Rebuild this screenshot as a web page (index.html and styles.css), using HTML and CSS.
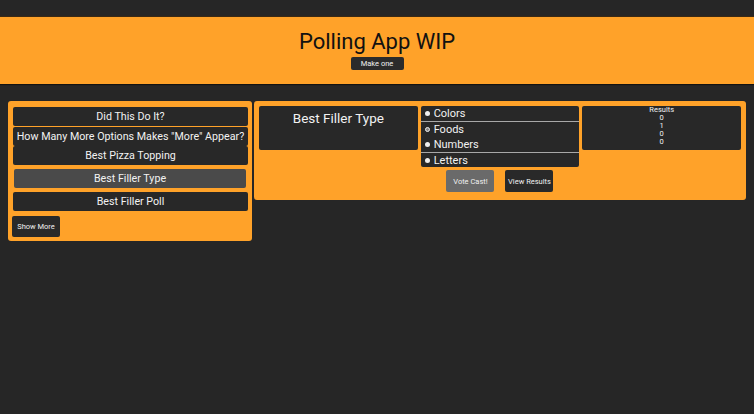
FILE: index.html
```html
<!DOCTYPE html>
<html>
<head>
<meta charset="utf-8">
<link rel="stylesheet" href="styles.css">
</head>
<body>
<header class="hero">
  <h1 class="hero-title">Polling App WIP</h1>
  <button class="btn-small">Make one</button>
</header>
<main class="main">
  <section class="poll-list">
    <button class="poll-item gap1">Did This Do It?</button>
    <button class="poll-item gap0">How Many More Options Makes "More" Appear?</button>
    <button class="poll-item gap4">Best Pizza Topping</button>
    <button class="poll-item selected gap4">Best Filler Type</button>
    <button class="poll-item gap5">Best Filler Poll</button>
    <button class="btn-more">Show More</button>
  </section>
  <section class="poll-view">
    <div class="poll-title">Best Filler Type</div>
    <div class="poll-options">
      <div class="opt sep"><span class="dot"></span>Colors</div>
      <div class="opt"><span class="dot ring"></span>Foods</div>
      <div class="opt sep"><span class="dot"></span>Numbers</div>
      <div class="opt last"><span class="dot"></span>Letters</div>
    </div>
    <div class="poll-results">
      <div>Results</div>
      <div>0</div>
      <div>1</div>
      <div>0</div>
      <div>0</div>
    </div>
    <div></div>
    <div class="actions">
      <button class="btn-act vote">Vote Cast!</button>
      <button class="btn-act">View Results</button>
    </div>
  </section>
</main>
</body>
</html>
```
FILE: styles.css
```css
* { box-sizing: border-box; }
body {
  margin: 0;
  background: #262626;
  font-family: Roboto, "Liberation Sans", sans-serif;
  color: #f2f2f2;
}
button { font-family: inherit; border: none; cursor: pointer; }
.hero {
  margin-top: 17px;
  height: 67px;
  background: #ffa229;
  display: flex;
  flex-direction: column;
  align-items: center;
  box-shadow: 0 1px 1px rgba(0,0,0,0.5), 0 -1px 1px rgba(90,50,0,0.4);
}
.hero-title {
  margin: 12px 0 0;
  font-size: 22px;
  font-weight: 400;
  line-height: 26px;
  color: #111;
}
.btn-small {
  margin-top: 2px;
  width: 53px;
  height: 13px;
  padding: 0;
  font-size: 7.5px;
  line-height: 13px;
  background: #2b2b2b;
  color: #f0f0f0;
  border-radius: 2px;
}
.main {
  display: flex;
  align-items: flex-start;
  gap: 2px;
  padding: 17px 8px 0;
}
.poll-list {
  width: 244px;
  background: #ffa229;
  border-radius: 3px;
  padding: 6px 4px 4px 5px;
  display: flex;
  flex-direction: column;
  align-items: stretch;
}
.poll-item {
  flex: none;
  height: 19px;
  padding: 0;
  margin: 0;
  background: #282828;
  color: #f2f2f2;
  font-size: 10.7px;
  line-height: 19px;
  border-radius: 2px;
  white-space: nowrap;
  overflow: visible;
}
.poll-item.selected { background: #4a4a4a; margin-left: 1px; margin-right: 2px; }
.poll-item.gap0 { margin-bottom: 0; }
.poll-item.gap1 { margin-bottom: 1px; }
.poll-item.gap4 { margin-bottom: 4px; }
.poll-item.gap5 { margin-bottom: 5px; }
.btn-more {
  flex: none;
  align-self: flex-start;
  margin-left: -1px;
  width: 48px;
  height: 21px;
  padding: 0;
  background: #292929;
  color: #f0f0f0;
  font-size: 7.5px;
  border-radius: 2px;
}
.poll-view {
  flex: 1;
  background: #ffa229;
  border-radius: 3px;
  padding: 5px 5px 8px;
  display: grid;
  grid-template-columns: 1fr 1fr 1fr;
  column-gap: 3px;
  row-gap: 3px;
  align-items: start;
}
.poll-title {
  height: 44px;
  background: #282828;
  border-radius: 2px;
  text-align: center;
  font-size: 13.5px;
  padding-top: 4px;
}
.poll-options {
  background: #282828;
  border-radius: 2px;
}
.opt {
  height: 15px;
  font-size: 11px;
  line-height: 15px;
  display: flex;
  align-items: center;
  padding-left: 4px;
}
.opt.sep { border-bottom: 1px solid #a8a8a8; height: 16px; }
.opt.last { height: 14px; }
.dot {
  width: 5px;
  height: 5px;
  border-radius: 50%;
  background: #eee;
  margin-right: 4px;
}
.dot.ring { background: #888; border: 1px solid #eee; }
.poll-results {
  height: 44px;
  background: #282828;
  border-radius: 2px;
  text-align: center;
  font-size: 7.5px;
  line-height: 8px;
  padding-top: 0;
}
.actions {
  display: flex;
  justify-content: center;
  gap: 11px;
}
.btn-act {
  width: 48px;
  height: 22px;
  padding: 0;
  background: #292929;
  color: #f0f0f0;
  font-size: 7.5px;
  border-radius: 2px;
}
.btn-act.vote { background: #6a6a6a; }
```
